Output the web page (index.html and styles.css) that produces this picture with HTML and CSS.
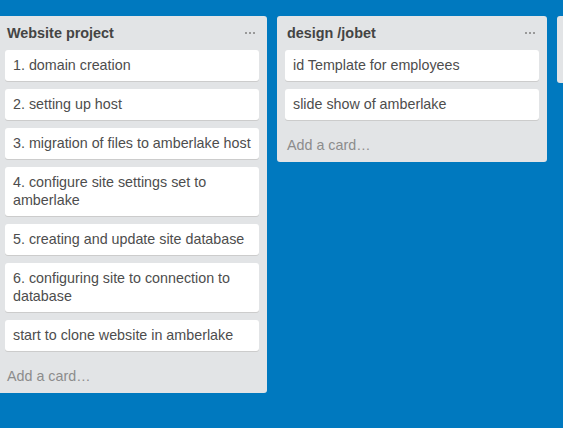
FILE: index.html
```html
<!DOCTYPE html>
<html>
<head>
<meta charset="utf-8">
<link rel="stylesheet" href="styles.css">
</head>
<body>
<div class="board">
  <div class="list">
    <div class="list-header">
      <h2 class="list-title">Website project</h2>
      <span class="list-menu"><i></i><i></i><i></i></span>
    </div>
    <div class="cards">
      <div class="card">1. domain creation</div>
      <div class="card">2. setting up host</div>
      <div class="card">3. migration of files to amberlake host</div>
      <div class="card">4. configure site settings set to amberlake</div>
      <div class="card">5. creating and update site database</div>
      <div class="card">6. configuring site to connection to database</div>
      <div class="card">start to clone website in amberlake</div>
    </div>
    <div class="add-card">Add a card…</div>
  </div>
  <div class="list">
    <div class="list-header">
      <h2 class="list-title">design /jobet</h2>
      <span class="list-menu"><i></i><i></i><i></i></span>
    </div>
    <div class="cards">
      <div class="card">id Template for employees</div>
      <div class="card">slide show of amberlake</div>
    </div>
    <div class="add-card">Add a card…</div>
  </div>
  <div class="list list-stub"></div>
</div>
</body>
</html>
```
FILE: styles.css
```css
html, body {
  margin: 0;
  padding: 0;
  height: 100%;
  overflow: hidden;
}
body {
  background: #0079bf;
  font-family: "Liberation Sans", Arial, sans-serif;
  font-size: 14.3px;
  line-height: 18px;
  color: #4d4d4d;
}
.board {
  display: flex;
  align-items: flex-start;
  gap: 10px;
  padding-top: 16px;
  margin-left: -3px;
}
.list {
  flex: 0 0 270px;
  width: 270px;
  background: #e2e4e6;
  border-radius: 3px;
  box-sizing: border-box;
}
.list-header {
  display: flex;
  align-items: center;
  justify-content: space-between;
  padding: 8px 10px;
}
.list-title {
  margin: 0;
  font-size: 14.4px;
  line-height: 18px;
  font-weight: bold;
  color: #444;
}
.list-menu {
  display: flex;
  gap: 2px;
  margin-right: 2px;
}
.list-menu i {
  width: 2px;
  height: 2px;
  background: #999;
}
.cards {
  padding: 0 8px;
}
.card {
  background: #fff;
  border-radius: 3px;
  box-shadow: 0 1px 0 #ccc;
  padding: 6px 4px 7px 8px;
  margin-bottom: 8px;
  color: #4d4d4d;
}
.add-card {
  padding: 8px 10px;
  color: #8c8c8c;
}
.list-stub {
  height: 67px;
}
```
